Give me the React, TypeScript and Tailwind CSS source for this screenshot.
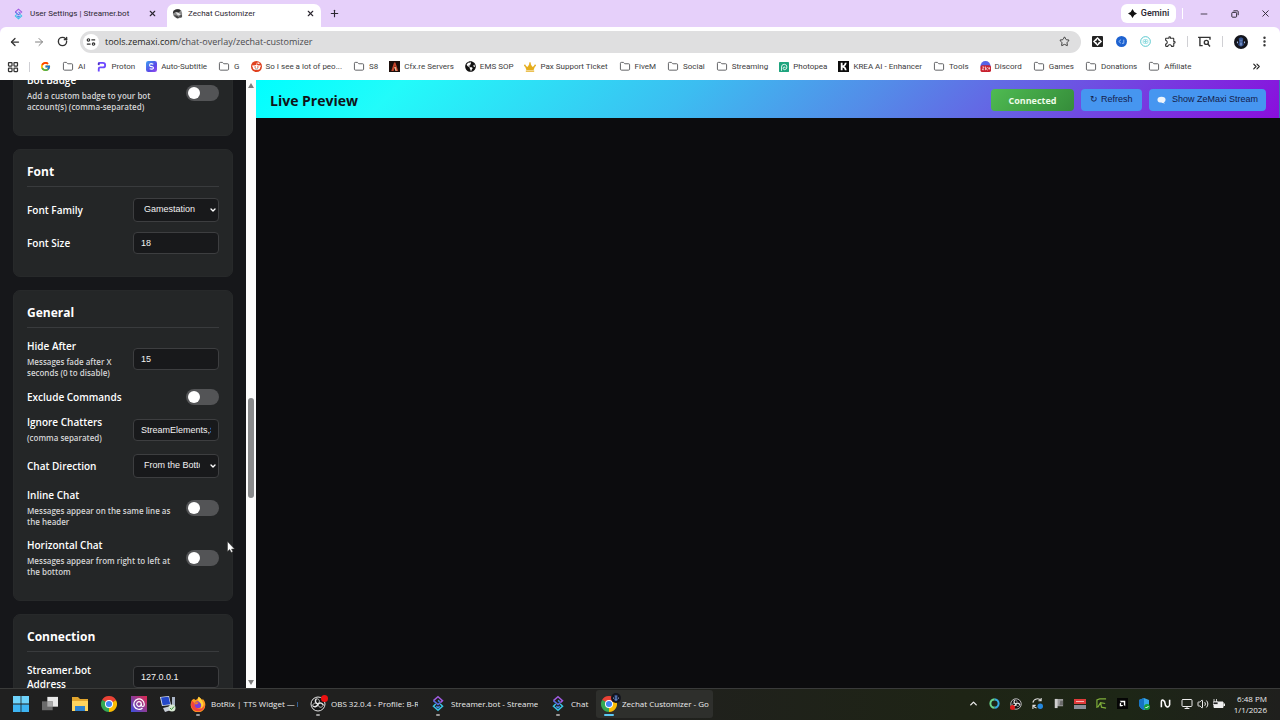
import type { ReactNode } from "react";
import {
  ArrowLeft,
  ArrowRight,
  ChevronDown,
  ChevronUp,
  ChevronsRight,
  Folder,
  LayoutGrid,
  Minus,
  Monitor,
  MoreVertical,
  Plus,
  RotateCw,
  Star,
  Volume2,
  X,
} from "lucide-react";
import { FcGoogle } from "react-icons/fc";
import { FaCrown, FaGlobeAmericas } from "react-icons/fa";
import { MdOutlineExtension } from "react-icons/md";

/* ---------- icons ---------- */

function StreamerBotIcon({ className }: { className: string }) {
  return (
    <svg viewBox="0 0 24 30" className={className} fill="none" strokeWidth="2.600">
      <path d="M4 10l8-7 8 7-4 3.500" stroke="#a05be0" />
      <path d="M4 10l8 7 4-3.500" stroke="#5a6fe4" />
      <path d="M8 16l-4 4 8 7 8-7-4-4" stroke="#38c6e6" />
      <path d="M12 9.500 15 12M9 20l3 2.500 3-2.500" stroke="#3f8fe8" />
    </svg>
  );
}

function ZechatIcon({ className }: { className: string }) {
  return (
    <svg viewBox="0 0 24 24" className={className}>
      <circle cx="12" cy="12" r="10" fill="#8b8b8b" />
      <path d="M2 9C5 3 14 1 19 5l-4 5-7-2-5 4z" fill="#2e2e2e" />
      <path d="M8 9l7 2 5 5-3 2-6-4z" fill="#e4e4e4" />
      <path d="M4 15l7 2 6 5-6 1z" fill="#3d3d3d" />
      <path d="M14 17l8-3v6l-5 2z" fill="#555" />
    </svg>
  );
}

function ChromeIcon({ className }: { className: string }) {
  return (
    <svg viewBox="0 0 24 24" className={className}>
      <path d="M12 12 1.600 6A12 12 0 0 1 22.400 6z" fill="#e94235" />
      <path d="M12 12 22.400 6A12 12 0 0 1 12 24z" fill="#fbbc04" />
      <path d="M12 12v12A12 12 0 0 1 1.600 6z" fill="#34a853" />
      <path d="M12 6h10.400L12 12z" fill="#e94235" />
      <path d="M17.200 15 12 24V12z" fill="#fbbc04" />
      <path d="M6.800 15 1.600 6 12 12z" fill="#34a853" />
      <circle cx="12" cy="12" r="6" fill="#fff" />
      <circle cx="12" cy="12" r="4.600" fill="#4285f4" />
    </svg>
  );
}

function FirefoxIcon() {
  return (
    <svg viewBox="0 0 24 24" className="size-4">
      <path d="M3 6l3-2 2 2c3-1 4-3 5-5 3 2 4 3 5 5 1-.500 1-1.500 1-2 3 3 4 6 4 9a11 11 0 0 1-22 1C1 11 2 8 3 6z" fill="#ff9a1f" />
      <path d="M3 7c-3 6-1 13 5 15 7 3 14-2 14-9 0 0-2 6-8 6-5 0-8-4-7-8z" fill="#f4433c" />
      <circle cx="12" cy="13" r="5" fill="#7a3fd6" />
      <path d="M13 1c3 2 6 6 7 11 0 3-2 6-4 7 2-4 1-8-2-10-2-2-3-5-1-8z" fill="#ffd23c" />
      <path d="M7 11c1-2 4-2 6-1-1 2-3 2-4 3z" fill="#ff7a22" />
    </svg>
  );
}

function ObsIcon({ className }: { className: string }) {
  return (
    <svg viewBox="0 0 24 24" className={className} fill="none" stroke="#e6e6e6">
      <circle cx="12" cy="12" r="10.500" fill="#151515" strokeWidth="1.500" />
      <path d="M12 12C8 11 7 7 9.500 4M12 12c-1 4-5 5-8 3M12 12c3-3 7-1 8 2" strokeWidth="2.200" />
      <path d="M9.500 4c5 0 6 5 2.500 8M4 15c0-4 4-6 8-3M20 14c-3 5-8 3-8-2" strokeWidth="1.200" />
    </svg>
  );
}

function WindowsIcon() {
  return (
    <svg viewBox="0 0 16 16" className="size-4">
      <path d="M0 0h7.600v7.600H0zM8.400 0H16v7.600H8.400z" fill="#6fd3fb" />
      <path d="M0 8.400h7.600V16H0zM8.400 8.400H16V16H8.400z" fill="#3db4f2" />
    </svg>
  );
}

function TaskViewIcon() {
  return (
    <svg viewBox="0 0 18 16" className="size-4">
      <rect x="6" y="0" width="12" height="11" fill="#e9e9e9" />
      <rect x="0" y="5" width="12" height="10" fill="#6a6a6a" />
      <rect x="6" y="5" width="6" height="6" fill="#a9a9a9" />
    </svg>
  );
}

function ExplorerIcon() {
  return (
    <svg viewBox="1 0 16 16" className="size-4">
      <path d="M1 1h6l2 2h8v12H1z" fill="#e2a52e" />
      <path d="M1 5h16v10H1z" fill="#ffd45e" />
      <path d="M4 10h10v5H4z" fill="#2f83cf" />
    </svg>
  );
}

function AtIcon() {
  return (
    <svg viewBox="0 0 16 16" className="size-4" fill="none">
      <defs>
        <linearGradient id="at" x1="0" y1="1" x2="1" y2="0">
          <stop offset="0" stopColor="#3b4fe0" />
          <stop offset="1" stopColor="#e0294e" />
        </linearGradient>
      </defs>
      <rect width="16" height="16" fill="url(#at)" />
      <path d="M11.500 12A5.200 5.200 0 1 1 13.200 8v1q0 1.500-1.400 1.500T10.400 9V8" stroke="#fff" strokeWidth="1.200" />
      <circle cx="8" cy="8" r="2.300" stroke="#fff" strokeWidth="1.200" />
    </svg>
  );
}

function RemoteIcon() {
  return (
    <svg viewBox="0 0 16 16" className="size-4">
      <path d="M0 1l9-1 2 9-9 1z" fill="#dfe6f3" />
      <path d="M1 1.600l7.500-.900L10.300 8.200l-7.600 1z" fill="#2447c8" />
      <path d="M3 12l8-2 3 3-9 3z" fill="#c9ced8" />
      <path d="M12 1h3v10l-3-1z" fill="#aab4c6" />
      <circle cx="12" cy="12" r="3.500" fill="#d8e8d4" />
      <path d="M10 12l1.500 1.500L14 10.500" fill="none" stroke="#3f9a3c" />
    </svg>
  );
}

function RedditIcon() {
  return (
    <svg viewBox="0 0 24 24" className="size-[11px]">
      <circle cx="12" cy="12" r="12" fill="#e0401e" />
      <ellipse cx="12" cy="14" rx="8" ry="5.500" fill="#fff" />
      <circle cx="4.500" cy="11" r="2" fill="#fff" />
      <circle cx="19.500" cy="11" r="2" fill="#fff" />
      <circle cx="9" cy="13" r="1.600" fill="#e0401e" />
      <circle cx="15" cy="13" r="1.600" fill="#e0401e" />
      <path d="M12 9l1-5 4 1" fill="none" stroke="#fff" strokeWidth="1.300" />
      <circle cx="17" cy="5" r="1.700" fill="#fff" />
      <path d="M9 16.500q3 2 6 0" fill="none" stroke="#222" />
    </svg>
  );
}

function ProtonIcon() {
  return (
    <svg viewBox="0 0 22 24" className="size-[11px]" fill="none" strokeWidth="4">
      <path d="M5 23v-6q0-3 3-3h6a5 5 0 0 0 0-10H4" stroke="#6d4aff" />
      <path d="M5 4v5" stroke="#4a2fc0" />
    </svg>
  );
}

function SubtitleIcon() {
  return (
    <svg viewBox="0 0 24 24" className="size-[11px]">
      <defs>
        <linearGradient id="sub" x1="0" y1="0" x2="1" y2="1">
          <stop offset="0" stopColor="#3aa0f0" />
          <stop offset=".6" stopColor="#5a49e8" />
          <stop offset="1" stopColor="#9a4df0" />
        </linearGradient>
      </defs>
      <rect width="24" height="24" rx="5" fill="url(#sub)" />
      <path d="M16 7q-8-3-8 1.500T12 12q5 1 4 4-2 3-8 1" fill="none" stroke="#fff" strokeWidth="2.500" />
    </svg>
  );
}

function CfxIcon() {
  return (
    <svg viewBox="0 0 24 24" className="size-[11px]">
      <rect width="24" height="24" fill="#1c0f0c" />
      <path d="M5 22 11 3h3l6 19h-4l-3-12-3 12z" fill="#c8452a" />
      <path d="M11 13h4l2 9h-3z" fill="#e8b08a" />
    </svg>
  );
}

function PhotopeaIcon() {
  return (
    <svg viewBox="0 0 24 24" className="size-[10px]" fill="none" stroke="#fff" strokeWidth="2">
      <rect width="24" height="24" rx="2" fill="#1fa47e" stroke="none" />
      <path d="M6 21v-9a6.500 6.500 0 1 1 6.500 6.500C9 18 9 12 12.500 12q3 0 2 2.500" />
    </svg>
  );
}

function KreaIcon() {
  return (
    <svg viewBox="0 0 24 24" className="size-[11px]">
      <rect width="24" height="24" fill="#0c0c0c" />
      <path d="M6 4h4v6q4 0 5-6h4q-1 6-5 8 4 2 5 8h-4q-1-6-5-6v6H6z" fill="#fff" />
    </svg>
  );
}

function DiscordBadgeIcon() {
  return (
    <svg viewBox="0 0 24 24" className="size-[11px]">
      <circle cx="12" cy="11" r="11" fill="#5562e8" />
      <rect x="1" y="9" width="23" height="15" rx="4" fill="#c8202e" />
      <path d="M5 13h4l-4 6h4M12 12v8M17 13l-4 4 4 3M20 13v6M18 16h4" fill="none" stroke="#fff" strokeWidth="1.500" />
    </svg>
  );
}

function FolderIcon() {
  return <Folder className="h-[11px] w-3 text-[#55565a]" strokeWidth={2} />;
}

function SiteInfoIcon() {
  return (
    <svg viewBox="0 0 12 12" className="size-[10px]" fill="none" stroke="#333" strokeWidth="1.400">
      <path d="M1 3.500h3M6.500 3.500H11M1 8.500h4.500M8 8.500h3" />
      <circle cx="3" cy="3.500" r="1.400" fill="#fff" />
      <circle cx="9" cy="8.500" r="1.400" fill="#fff" />
    </svg>
  );
}

function MediaIcon() {
  return (
    <svg viewBox="0 0 14 12" className="h-[11px] w-[13px]" fill="none" stroke="#333" strokeWidth="1.500">
      <path d="M5 10.500H2V1.500H0M2 1.500h11V4" />
      <circle cx="9" cy="7" r="2.200" />
      <path d="M10.500 8.500 13 11.500" />
    </svg>
  );
}

function AvatarIcon({ className }: { className: string }) {
  return (
    <svg viewBox="0 0 24 24" className={className}>
      <circle cx="12" cy="12" r="12" fill="#14151c" />
      <path d="M8 6l4-2 4 2-1 6 2 5-5 3-5-3 2-5z" fill="#34518c" />
      <path d="M10 8h1v3h-1zM13 8h1v3h-1zM11 13h2v5h-2zM5 11h2v3H5zM17 11h2v3h-2z" fill="#9db6e4" />
    </svg>
  );
}

/* ---------- browser chrome ---------- */

const bookmarks: { label: string; icon: ReactNode }[] = [
  { label: "", icon: <FcGoogle className="size-[11px]" /> },
  { label: "AI", icon: <FolderIcon /> },
  { label: "Proton", icon: <ProtonIcon /> },
  { label: "Auto-Subtitle", icon: <SubtitleIcon /> },
  { label: "G", icon: <FolderIcon /> },
  { label: "So I see a lot of peo...", icon: <RedditIcon /> },
  { label: "S8", icon: <FolderIcon /> },
  { label: "Cfx.re Servers", icon: <CfxIcon /> },
  { label: "EMS SOP", icon: <FaGlobeAmericas className="size-[11px] text-[#111]" /> },
  { label: "Pax Support Ticket", icon: <FaCrown className="size-[12px] text-[#e5ad1c]" /> },
  { label: "FiveM", icon: <FolderIcon /> },
  { label: "Social", icon: <FolderIcon /> },
  { label: "Streaming", icon: <FolderIcon /> },
  { label: "Photopea", icon: <PhotopeaIcon /> },
  { label: "KREA AI - Enhancer", icon: <KreaIcon /> },
  { label: "Tools", icon: <FolderIcon /> },
  { label: "Discord", icon: <DiscordBadgeIcon /> },
  { label: "Games", icon: <FolderIcon /> },
  { label: "Donations", icon: <FolderIcon /> },
  { label: "Affiliate", icon: <FolderIcon /> },
];

function TabStrip() {
  return (
    <div className="flex h-[27px] items-end bg-[#e6d0fa] pl-[7px] font-['Roboto',sans-serif] text-[8px] text-[#2b2630]">
      <div className="flex h-[27px] w-[160px] items-center pl-[6px] pr-[10px]">
        <StreamerBotIcon className="h-3 w-[11px]" />
        <span className="ml-[6px] grow">User Settings | Streamer.bot</span>
        <button aria-label="Close tab">
          <X className="size-[9px]" strokeWidth={3} />
        </button>
      </div>
      <div className="flex h-[23px] w-[154px] items-center rounded-t-[7px] bg-white pb-1 pl-[5px] pr-[6px]">
        <ZechatIcon className="size-[11px]" />
        <span className="ml-[5px] grow">Zechat Customizer</span>
        <button aria-label="Close tab">
          <X className="size-[9px]" strokeWidth={3} />
        </button>
      </div>
      <button aria-label="New tab" className="flex h-[27px] w-[27px] items-center justify-center">
        <Plus className="size-[11px]" strokeWidth={2.500} />
      </button>
      <div className="ml-auto flex h-[27px] items-center">
        <button className="flex h-[19px] w-[55px] items-center justify-center gap-1 rounded-[6px] bg-white text-[9px] font-medium">
          <svg viewBox="0 0 12 12" className="size-[9px]">
            <path d="M6 0q1.500 4.500 6 6-4.500 1.500-6 6-1.500-4.500-6-6 4.500-1.500 6-6z" fill="#111" />
          </svg>
          Gemini
        </button>
        <span className="ml-[6px] mr-[5px] h-[11px] w-px bg-white" />
        <button aria-label="Minimize" className="flex w-[31px] justify-center">
          <Minus className="size-[10px]" />
        </button>
        <button aria-label="Restore" className="flex w-[31px] justify-center">
          <svg viewBox="0 0 10 10" className="size-2" fill="none" stroke="#2b2630" strokeWidth="1.200">
            <rect x="1" y="3" width="6" height="6" rx="1" />
            <path d="M3 1.500q0-.500.500-.500H8q1 0 1 1v4.500" />
          </svg>
        </button>
        <button aria-label="Close" className="flex w-[30px] justify-center">
          <X className="size-[11px]" strokeWidth={2} />
        </button>
      </div>
    </div>
  );
}

function Toolbar() {
  return (
    <div className="bg-[#e6d0fa]">
      <div className="flex h-[29px] items-center rounded-t-[6px] bg-white pl-[9px] pr-[9px] text-[#333]">
        <button aria-label="Back" className="mr-3">
          <ArrowLeft className="size-3" strokeWidth={2.500} />
        </button>
        <button aria-label="Forward" className="mr-3 text-[#808080]">
          <ArrowRight className="size-3" strokeWidth={2} />
        </button>
        <button aria-label="Reload" className="mr-3">
          <RotateCw className="size-[11px]" strokeWidth={3} />
        </button>
        <div className="flex h-[22px] grow items-center rounded-full bg-[#dfdfe0] pl-[3px] pr-[11px]">
          <span className="flex size-[16px] items-center justify-center rounded-full bg-white">
            <SiteInfoIcon />
          </span>
          <span className="ml-[6px] grow text-[9px] text-[#4a4a4e]">
            <span className="text-[#1f1f22]">tools.zemaxi.com</span>/chat-overlay/zechat-customizer
          </span>
          <Star className="size-[11px]" strokeWidth={2} />
        </div>
        <div className="ml-[11px] flex items-center gap-[13px]">
          <svg viewBox="0 0 12 12" className="size-[11px]">
            <rect width="12" height="12" rx="1" fill="#222" />
            <path d="M6 1l5 5-5 5-5-5z" fill="#fff" />
            <path d="M6 3l1 2 2 1-2 1-1 2-1-2-2-1 2-1z" fill="#222" />
          </svg>
          <svg viewBox="0 0 12 12" className="size-[11px]">
            <circle cx="6" cy="6" r="6" fill="#1e62d0" />
            <path d="M5.500 4 3 6l2.500 2M8.500 4v4H6.500" fill="none" stroke="#9fc4f5" />
          </svg>
          <svg viewBox="0 0 12 12" className="size-[11px]" fill="none" stroke="#4cc3c9">
            <circle cx="6" cy="6" r="5.300" />
            <rect x="3.500" y="4" width="5" height="4" rx="1" stroke="#8fdde0" />
            <circle cx="6" cy="6" r=".8" />
          </svg>
          <MdOutlineExtension className="size-[13px]" />
        </div>
        <span className="ml-[10px] h-[11px] w-px bg-[#d0d0d4]" />
        <span className="ml-[10px]">
          <MediaIcon />
        </span>
        <span className="ml-[11px] h-[11px] w-px bg-[#d0d0d4]" />
        <AvatarIcon className="ml-[11px] size-[14px]" />
        <button aria-label="Menu" className="ml-[10px]">
          <MoreVertical className="size-[13px]" strokeWidth={2.500} />
        </button>
      </div>
    </div>
  );
}

function BookmarksBar() {
  return (
    <nav className="flex h-[25px] items-center overflow-hidden bg-white pb-[3px] pl-[7px] pr-[18px] font-['Roboto',sans-serif] text-[8px] text-[#3c3c40]">
      <LayoutGrid className="size-3 shrink-0 text-[#333]" strokeWidth={2.500} />
      <span className="mx-[10px] h-[10px] w-px shrink-0 bg-[#cfcfd4]" />
      <div className="flex gap-[11px]">
        {bookmarks.map((b, i) => (
          <a key={i} href="#" className="flex shrink-0 items-center gap-[4px] whitespace-nowrap" aria-label={b.label || "Google"}>
            {b.icon}
            {b.label && <span className="leading-[14px] pt-px">{b.label}</span>}
          </a>
        ))}
      </div>
      <ChevronsRight className="ml-auto size-[11px] shrink-0 text-[#222]" strokeWidth={2.500} />
    </nav>
  );
}

/* ---------- settings sidebar ---------- */

const fieldClass =
  "w-full rounded-[4px] border border-[#3d3e40] bg-[#18191b] font-['Liberation_Sans',sans-serif] text-[9px] text-[#f2f2f2] outline-none";

function Card({ title, children }: { title?: string; children: ReactNode }) {
  return (
    <section className="rounded-[7px] border border-[#27292a] bg-[#242627] p-[13px]">
      {title && (
        <h2 className="mb-[11px] border-b border-[#393b3d] pb-[5px] text-[12px] font-bold leading-[18px] text-white">
          {title}
        </h2>
      )}
      <div className="flex flex-col gap-[10px] pb-[9px]">{children}</div>
    </section>
  );
}

function Row({ id, label, hint, children }: { id: string; label: string; hint?: string; children: ReactNode }) {
  return (
    <div className="flex items-center justify-between">
      <label htmlFor={id} className="min-w-0 flex-1 pr-[10px] text-[10px] font-semibold leading-[14px] text-white">
        {label}
        {hint && <span className="mt-[3px] block pb-px text-[8px] leading-[11px] text-[#d4d5d6]">{hint}</span>}
      </label>
      {children}
    </div>
  );
}

function TextField({ id, value }: { id: string; value: string }) {
  return (
    <div className="w-[86px]">
      <input id={id} type="text" defaultValue={value} className={`${fieldClass} block h-[22px] px-[7px]`} />
    </div>
  );
}

function SelectField({ id, options }: { id: string; options: string[] }) {
  return (
    <div className="relative w-[86px]">
      <select id={id} className={`${fieldClass} block h-[24px] appearance-none pl-[10px] pr-[18px]`}>
        {options.map((o) => (
          <option key={o}>{o}</option>
        ))}
      </select>
      <ChevronDown className="pointer-events-none absolute right-[2px] top-[8px] size-2 text-white" strokeWidth={4} />
    </div>
  );
}

function Toggle({ id }: { id: string }) {
  return (
    <input
      id={id}
      type="checkbox"
      role="switch"
      className="flex h-4 w-[33px] shrink-0 appearance-none items-center rounded-full bg-[#535456] pl-[2px] before:size-[12px] before:rounded-full before:bg-white checked:justify-end checked:bg-[#4caf50] checked:pr-[2px]"
    />
  );
}

function Sidebar() {
  return (
    <aside className="flex w-[256px] shrink-0 overflow-hidden bg-[#16171a]">
      <div className="-mt-[21px] flex w-[246px] flex-col gap-[13px] px-[13px]">
        <Card>
          <Row id="bot-badge" label="Bot Badge" hint="Add a custom badge to your bot account(s) (comma-separated)">
            <Toggle id="bot-badge" />
          </Row>
        </Card>
        <Card title="Font">
          <Row id="font-family" label="Font Family">
            <SelectField id="font-family" options={["Gamestation"]} />
          </Row>
          <Row id="font-size" label="Font Size">
            <TextField id="font-size" value="18" />
          </Row>
        </Card>
        <Card title="General">
          <Row id="hide-after" label="Hide After" hint="Messages fade after X seconds (0 to disable)">
            <TextField id="hide-after" value="15" />
          </Row>
          <Row id="exclude-commands" label="Exclude Commands">
            <Toggle id="exclude-commands" />
          </Row>
          <Row id="ignore-chatters" label="Ignore Chatters" hint="(comma separated)">
            <TextField id="ignore-chatters" value="StreamElements,Streamlabs" />
          </Row>
          <Row id="chat-direction" label="Chat Direction">
            <SelectField id="chat-direction" options={["From the Bottom"]} />
          </Row>
          <Row id="inline-chat" label="Inline Chat" hint="Messages appear on the same line as the header">
            <Toggle id="inline-chat" />
          </Row>
          <Row id="horizontal-chat" label="Horizontal Chat" hint="Messages appear from right to left at the bottom">
            <Toggle id="horizontal-chat" />
          </Row>
        </Card>
        <Card title="Connection">
          <Row id="address" label="Streamer.bot Address">
            <TextField id="address" value="127.0.0.1" />
          </Row>
        </Card>
      </div>
      <div className="flex w-[10px] flex-col items-center justify-between bg-[#fcfcfc] py-[3px]">
        <svg viewBox="0 0 6 5" className="h-[5px] w-[6px]">
          <path d="M3 0l3 5H0z" fill="#7d7d7d" />
        </svg>
        <div className="flex w-full grow flex-col items-center">
          <div className="grow-[311]" />
          <div className="h-[100px] w-[6px] rounded-full bg-[#898a8b]" />
          <div className="grow-[183]" />
        </div>
        <svg viewBox="0 0 6 5" className="h-[5px] w-[6px]">
          <path d="M0 0h6L3 5z" fill="#7d7d7d" />
        </svg>
      </div>
    </aside>
  );
}

/* ---------- preview ---------- */

function Preview() {
  return (
    <main className="flex min-w-0 grow flex-col bg-[#0c0c0e]">
      <header className="flex h-[38px] items-center border-r border-[#3f6fb8] bg-linear-[135deg,#00ffff_0%,#22fbfa_14%,#3cbdf1_42%,#548be8_60%,#8a0edc_100%] pl-[14px] pr-[13px] pt-[2px]">
        <h1 className="grow text-[14px] font-bold text-[#101418]">Live Preview</h1>
        <div className="flex gap-[7px]">
          <span className="flex h-[22px] w-[83px] items-center justify-center rounded-[4px] bg-linear-[135deg,#4fbb52,#358c3a] pt-px text-[9px] font-bold text-[#eefbe9]">
            Connected
          </span>
          <button className="h-[22px] w-[61px] rounded-[4px] bg-[#4696f0] font-['Liberation_Sans',sans-serif] text-[9px] text-[#14204a]">
            ↻ Refresh
          </button>
          <button className="flex h-[22px] w-[117px] items-center justify-center gap-[6px] rounded-[4px] bg-[#4696f0] font-['Liberation_Sans',sans-serif] text-[9px] text-[#14204a]">
            <svg viewBox="0 0 10 8" className="h-2 w-[9px]">
              <ellipse cx="5" cy="3.600" rx="4.500" ry="3.300" fill="#eef4fb" />
              <path d="M6 5l3 3-4-1z" fill="#eef4fb" />
            </svg>
            Show ZeMaxi Stream
          </button>
        </div>
      </header>
    </main>
  );
}

/* ---------- taskbar ---------- */

function TaskButton({ icon, label }: { icon: ReactNode; label: string }) {
  return (
    <button className="flex h-[28px] w-[120px] items-center gap-[4px] pl-1 pr-[7px] text-left">
      <span className="relative flex w-[18px] shrink-0 justify-center">
        {icon}
        <span className="absolute -bottom-[4px] h-[2px] w-1 rounded-full bg-[#9a9a9a]" />
      </span>
      <span className="overflow-hidden whitespace-nowrap">{label}</span>
    </button>
  );
}

function Taskbar() {
  return (
    <footer className="flex h-8 shrink-0 items-center border-t border-[#3a3b3a] bg-linear-[90deg,#202020_0%,#20201e_50%,#1e2415_75%,#1d2616_88%,#1f1f1d_100%] pb-[2px] pl-[13px] pr-[13px] text-[8px] text-[#ececec]">
      <div className="mr-[9px] flex w-[163px] shrink-0 items-center justify-between">
        <WindowsIcon />
        <TaskViewIcon />
        <ExplorerIcon />
        <ChromeIcon className="size-4" />
        <AtIcon />
        <RemoteIcon />
      </div>
      <TaskButton icon={<FirefoxIcon />} label="BotRix | TTS Widget — M" />
      <TaskButton
        icon={
          <>
            <ObsIcon className="size-4" />
            <span className="absolute -right-[1px] -top-[1px] size-[7px] rounded-full bg-[#ee1111]" />
          </>
        }
        label="OBS 32.0.4 - Profile: B-R"
      />
      <TaskButton icon={<StreamerBotIcon className="h-[17px] w-[14px]" />} label="Streamer.bot - Streamer" />
      <button className="flex h-[28px] w-[51px] items-center gap-[4px] pl-1 text-left">
        <span className="relative flex w-[18px] shrink-0 justify-center">
          <StreamerBotIcon className="h-[17px] w-[14px]" />
          <span className="absolute -bottom-[4px] h-[2px] w-1 rounded-full bg-[#9a9a9a]" />
        </span>
        Chat
      </button>
      <button className="flex h-[28px] w-[117px] items-center gap-[4px] rounded-[3px] bg-[#2e2f2c] pl-1 text-left">
        <span className="relative flex w-[18px] shrink-0 justify-center">
          <ChromeIcon className="size-4" />
          <AvatarIcon className="absolute -right-[3px] -top-[3px] size-[10px]" />
          <span className="absolute -bottom-[4px] h-[2px] w-[10px] rounded-full bg-[#5cc8f4]" />
        </span>
        <span className="overflow-hidden whitespace-nowrap">Zechat Customizer - Go</span>
      </button>
      <div className="ml-auto flex items-center gap-[9px]">
        <div className="flex items-center gap-[10px]">
          <ChevronUp className="size-[11px]" strokeWidth={3} />
          <svg viewBox="0 0 12 12" className="size-[11px]" fill="none" strokeWidth="2.200">
            <path d="M6 1.500A4.500 4.500 0 0 1 6 10.500" stroke="#36a8e0" />
            <path d="M6 10.500A4.500 4.500 0 0 1 6 1.500" stroke="#6ad48a" />
          </svg>
          <span className="relative">
            <ObsIcon className="size-3" />
            <span className="absolute bottom-0 left-0 size-[5px] rounded-full bg-[#dd1c1c]" />
          </span>
          <svg viewBox="0 0 12 12" className="size-[11px]" fill="none" stroke="#dcdcdc" strokeWidth="1.200">
            <path d="M1 5a5 5 0 0 1 9-2M10 0v3H7M1 12V8h3M1.500 8.500A5 5 0 0 0 5 11" />
            <circle cx="9" cy="9" r="3" fill="#2488e0" stroke="none" />
          </svg>
          <svg viewBox="0 0 12 12" className="size-[11px]">
            <path d="M2 1h9v8H4l-2 2z" fill="#9b9b9b" />
            <path d="M2 1h3v10H2z" fill="#cfcfcf" />
            <path d="M8 3h3v5H7z" fill="#6b6b6b" />
          </svg>
          <svg viewBox="0 0 12 12" className="size-[12px]">
            <path d="M0 1h12v5H0z" fill="#e03a3a" />
            <path d="M2 3h8v1H2z" fill="#f7b7b7" />
            <path d="M0 7h12v4H0z" fill="#8b8f98" />
          </svg>
          <svg viewBox="0 0 12 12" className="size-[11px]" fill="none" stroke="#7fae3a" strokeWidth="1.300">
            <path d="M1 11V2l3-1h7M2 10l3-5 5 1M5 5l1 5 5 1" />
          </svg>
          <svg viewBox="0 0 12 12" className="size-[11px]">
            <rect width="12" height="12" fill="#050505" />
            <path d="M3 3h6v6L7.500 7.500v-3h-3zM3 6l1.500-1.500V7.500H7L5.500 9H3z" fill="#fff" />
          </svg>
          <svg viewBox="0 0 12 12" className="size-[12px]">
            <path d="M6 0l5 2v4q0 4-5 6-5-2-5-6V2z" fill="#36a7ea" />
            <path d="M6 0v12Q1 10 1 6V2z" fill="#1673c4" />
            <circle cx="9" cy="9" r="3" fill="#18a03c" />
            <path d="M7.500 9l1 1L10.500 8" fill="none" stroke="#fff" />
          </svg>
          <svg viewBox="0 0 12 12" className="size-[11px]" fill="none" stroke="#fff" strokeWidth="1.700">
            <path d="M1.500 10V4.500q0-3 2-2t2 3.500 2 3.500 3-2V2" />
          </svg>
          <span className="flex items-center gap-[4px]">
            <Monitor className="size-3" strokeWidth={2} />
            <Volume2 className="size-3" strokeWidth={2} />
            <svg viewBox="0 0 12 10" className="h-[10px] w-3">
              <path d="M1 3h9v5.500H1z" fill="#efefef" stroke="#efefef" />
              <path d="M10.500 4.500H12v2.500h-1.500z" fill="#efefef" />
              <path d="M1 0v3M3.500 0v3M0 3h5v2.500H0z" fill="#222" stroke="#efefef" strokeWidth=".8" />
            </svg>
          </span>
        </div>
        <span className="text-right leading-[11px]">
          6:48 PM
          <br />
          1/1/2026
        </span>
      </div>
    </footer>
  );
}

export default function App() {
  return (
    <div className="relative flex h-screen flex-col overflow-hidden bg-[#0c0c0e] font-['Open_Sans','Noto_Sans',sans-serif]">
      <TabStrip />
      <Toolbar />
      <BookmarksBar />
      <div className="flex min-h-0 grow">
        <Sidebar />
        <Preview />
      </div>
      <Taskbar />
      <svg viewBox="0 0 8 12" className="pointer-events-none absolute left-[227px] top-[541px] h-3 w-2">
        <path d="M.5.5v10l2.200-2L4.300 11.500l1.500-.800L4.500 8H7.500z" fill="#fff" stroke="#333" strokeWidth=".5" />
      </svg>
    </div>
  );
}
